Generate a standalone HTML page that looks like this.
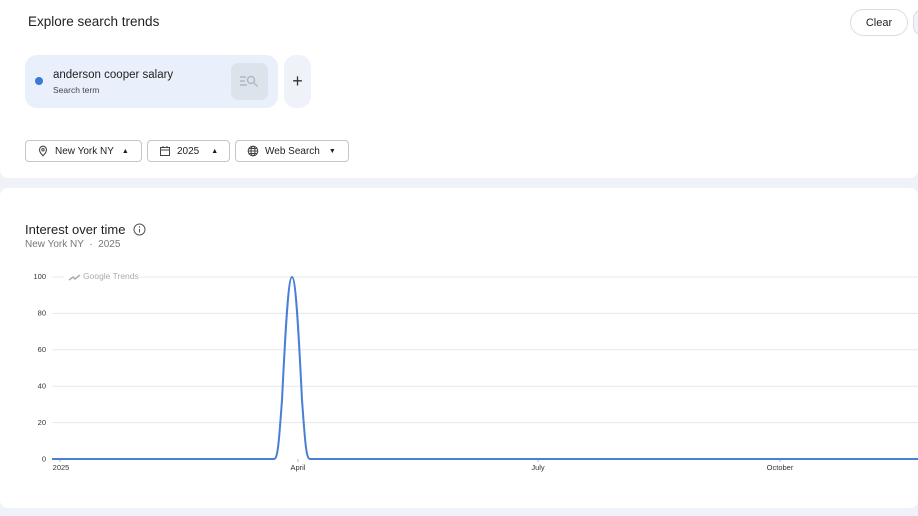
<!DOCTYPE html>
<html><head><meta charset="utf-8"><style>
*{margin:0;padding:0;box-sizing:border-box}
body{width:918px;height:516px;overflow:hidden;background:#eff3f9;font-family:"Liberation Sans",Arial,sans-serif;color:#1f1f1f;position:relative}
.card1{position:absolute;left:0;top:0;width:918px;height:178px;background:#fff;border-radius:0 0 8px 8px}
.card2{position:absolute;left:0;top:188px;width:918px;height:320px;background:#fff;border-radius:8px}
.abs{position:absolute}
.chip{position:absolute;top:140px;height:22px;border:1px solid #c4c7c5;border-radius:4px;font-size:10px;display:flex;align-items:center;color:#1f1f1f}
</style></head><body>
<div class="card1">
<div class="abs" style="left:28px;top:14px;font-size:13.5px">Explore search trends</div>
<div class="abs" style="left:850px;top:9px;width:58px;height:27px;border:1px solid #dadce0;border-radius:14px;font-size:11px;display:flex;align-items:center;justify-content:center">Clear</div>
<div class="abs" style="left:913px;top:9px;width:20px;height:27px;border:1px solid #dadce0;border-radius:14px;background:#f0f4f9"></div>
<div class="abs" style="left:25px;top:55px;width:253px;height:53px;background:#e9f0fb;border-radius:12px"></div>
<div class="abs" style="left:35px;top:77px;width:8px;height:8px;border-radius:50%;background:#3c78d8"></div>
<div class="abs" style="left:53px;top:69px;font-size:11.5px">anderson cooper salary</div>
<div class="abs" style="left:53px;top:85px;font-size:8.5px;color:#444">Search term</div>
<div class="abs" style="left:231px;top:63px;width:37px;height:37px;background:#dde3ea;border-radius:7px">
<svg width="37" height="37" viewBox="0 0 37 37"><g stroke="#b0b8c2" stroke-width="1.5" fill="none"><path d="M9 14h6M9 18h5M9 22h7"/><circle cx="20" cy="17" r="3.5"/><path d="M22.5 19.5l4 4"/></g></svg></div>
<div class="abs" style="left:284px;top:55px;width:27px;height:53px;background:#eff2f8;border-radius:12px;font-size:18px;display:flex;align-items:center;justify-content:center;color:#333">+</div>
<div class="chip" style="left:25px;width:117px">
<svg style="margin-left:11px" width="12" height="12" viewBox="0 0 12 12"><path d="M6 1.2a3.5 3.5 0 0 0-3.5 3.5c0 2.6 3.5 6 3.5 6s3.5-3.4 3.5-6A3.5 3.5 0 0 0 6 1.2z" fill="none" stroke="#444" stroke-width="1.1"/><circle cx="6" cy="4.7" r="1.2" fill="none" stroke="#444"/></svg>
<span style="margin-left:6px">New York NY</span><span style="margin-left:8px;font-size:7px">▲</span></div>
<div class="chip" style="left:147px;width:83px">
<svg style="margin-left:11px" width="12" height="12" viewBox="0 0 12 12"><rect x="1.5" y="2.5" width="9" height="8" fill="none" stroke="#444"/><path d="M1.5 5h9M4 1v2M8 1v2" stroke="#444"/></svg>
<span style="margin-left:6px">2025</span><span style="margin-left:12px;font-size:7px">▲</span></div>
<div class="chip" style="left:235px;width:114px">
<svg style="margin-left:11px" width="12" height="12" viewBox="0 0 12 12"><g fill="none" stroke="#444" stroke-width="1"><circle cx="6" cy="6" r="4.8"/><ellipse cx="6" cy="6" rx="2" ry="4.8"/><path d="M1.2 6h9.6M2 3.5h8M2 8.5h8"/></g></svg>
<span style="margin-left:6px">Web Search</span><span style="margin-left:9px;font-size:7px">▼</span></div>
</div>
<div class="card2">
<div class="abs" style="left:25px;top:34px;font-size:13px">Interest over time</div>
<svg class="abs" style="left:133px;top:35px" width="13" height="13" viewBox="0 0 13 13"><circle cx="6.5" cy="6.5" r="5.5" fill="none" stroke="#555"/><path d="M6.5 6v3.5" stroke="#555"/><circle cx="6.5" cy="4" r=".7" fill="#555"/></svg>
<div class="abs" style="left:25px;top:51px;font-size:10px;color:#777">New York NY &nbsp;·&nbsp; 2025</div>
</div>
<svg class="abs" style="left:0;top:0" width="918" height="516">
<g stroke="#e8e8e8" stroke-width="1">
<path d="M52 277H918M52 313.4H918M52 349.8H918M52 386.2H918M52 422.6H918"/>
</g>
<rect x="64" y="270" width="76" height="14" fill="#fff"/>
<g font-size="7.5" fill="#333" text-anchor="end" font-family="Liberation Sans">
<text x="46" y="279">100</text><text x="46" y="315.5">80</text><text x="46" y="352">60</text><text x="46" y="388.5">40</text><text x="46" y="425">20</text><text x="46" y="461.5">0</text></g>
<path d="M69 280l4-3 2 2 5-4" stroke="#aaa" stroke-width="1.5" fill="none"/>
<text x="83" y="279" font-size="8.5" fill="#aaa" font-family="Liberation Sans">Google Trends</text>
<path d="M60 459v3M298 459v3M538 459v3M780 459v3" stroke="#bbb"/>
<g font-size="7.5" fill="#333" text-anchor="middle" font-family="Liberation Sans">
<text x="61" y="470">2025</text><text x="298" y="470">April</text><text x="538" y="470">July</text><text x="780" y="470">October</text></g>
<path d="M52 459H274C278 459 279 440 282 400C285 340 288 277 292 277C296 277 299 340 302 400C305 440 306 459 310 459H918" stroke="#4a7fd6" stroke-width="2" fill="none"/>
</svg>
</body></html>
